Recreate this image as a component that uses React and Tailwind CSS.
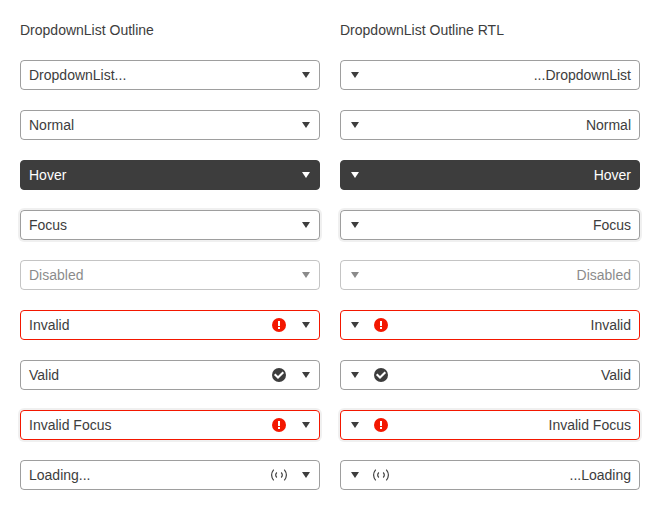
const rows = [
  { text: 'DropdownList', dots: true },
  { text: 'Normal' },
  { text: 'Hover', box: 'border-[#3d3d3d] bg-[#3d3d3d] text-white' },
  { text: 'Focus', box: 'border-[#3d3d3d]/50 shadow-[0_0_0_2px_rgba(0,0,0,0.06)]' },
  { text: 'Disabled', box: 'border-[#3d3d3d]/50 opacity-60' },
  { text: 'Invalid', icon: 'invalid', box: 'border-[#f31700]' },
  { text: 'Valid', icon: 'valid' },
  { text: 'Invalid Focus', icon: 'invalid', box: 'border-[#f31700] shadow-[0_0_0_2px_rgba(0,0,0,0.06)]' },
  { text: 'Loading', dots: true, icon: 'loading' },
];

function StatusIcon({ type }) {
  if (type === 'loading') {
    return (
      <svg width="16" height="16" viewBox="0 0 16 16" fill="none" stroke="#3d3d3d" strokeWidth="1.15">
        <path d="M2.7 2.6Q-1.5 8 2.7 13.4M13.3 2.6Q17.5 8 13.3 13.4M5.8 5.5Q3.6 8 5.8 10.5M10.2 5.5Q12.4 8 10.2 10.5" />
      </svg>
    );
  }
  return (
    <svg width="16" height="16" viewBox="0 0 16 16">
      <circle cx="8" cy="8" r="7" fill={type === 'valid' ? '#3d3d3d' : '#f31700'} />
      {type === 'valid' ? (
        <path d="M3.7 7.2l3.3 3.3 5.3-5.3" fill="none" stroke="white" strokeWidth="2.1" />
      ) : (
        <path d="M7 4h2v5H7zM7 10h2v2H7z" fill="white" />
      )}
    </svg>
  );
}

function Dropdown({ row, rtl }) {
  return (
    <div className={`flex h-[30px] items-center rounded border ${rtl ? 'flex-row-reverse' : ''} ${row.box || 'border-[#3d3d3d]/50'}`}>
      <span className="flex-1 px-2 leading-5">
        {rtl && row.dots ? '...' : ''}{row.text}{!rtl && row.dots ? '...' : ''}
      </span>
      {row.icon && <span className={rtl ? 'mx-1' : 'mr-1.5'}><StatusIcon type={row.icon} /></span>}
      <span className={`flex justify-center ${rtl ? 'w-7' : 'w-[26px]'}`}>
        <svg width="16" height="16" viewBox="0 0 16 16" fill="currentColor"><path d="M4 5h8l-4 6z" /></svg>
      </span>
    </div>
  );
}

function Column({ title, rtl }) {
  return (
    <section className={`flex w-[300px] flex-col gap-5 ${rtl ? 'text-right' : ''}`}>
      <h2 className="h-5 text-left leading-5">{title}</h2>
      {rows.map((row) => <Dropdown key={row.text} row={row} rtl={rtl} />)}
    </section>
  );
}

export default function App() {
  return (
    <main className="flex h-[510px] w-[660px] gap-5 bg-white p-5 font-['Liberation_Sans',Arial,sans-serif] text-sm text-[#3d3d3d]">
      <Column title="DropdownList Outline" />
      <Column title="DropdownList Outline RTL" rtl />
    </main>
  );
}
